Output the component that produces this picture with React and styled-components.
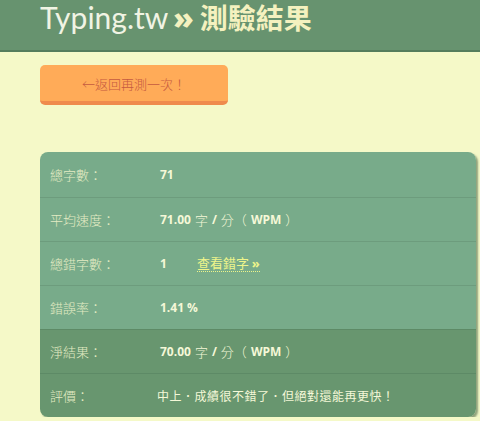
import styled, { createGlobalStyle } from 'styled-components';

const GlobalStyle = createGlobalStyle`
  html, body {
    margin: 0;
    padding: 0;
    background: #f5f9c8;
    font-family: "Open Sans", "Noto Sans CJK TC", sans-serif;
  }
`;

const Header = styled.header`
  background: #67936f;
  border-bottom: 2px solid #557d5c;
  height: 52px;
  padding: 0 40px;
  box-sizing: border-box;
  display: flex;
  align-items: flex-start;
  overflow: hidden;
`;

const Title = styled.h1`
  margin: 0;
  font-size: 30px;
  font-weight: 400;
  line-height: 34px;
  color: #f1f4e4;
  font-family: Lato, "Noto Sans CJK TC", sans-serif;
  white-space: nowrap;

  & .sep {
    font-family: "Open Sans", sans-serif;
    font-weight: 800;
    font-size: 30px;
    color: #f4f1bf;
    margin: 0 6px 0 5px;
  }

  & .page {
    font-weight: 700;
    font-size: 28px;
    color: #f4f1bf;
    font-family: "Noto Sans CJK TC", sans-serif;
  }
`;

const Main = styled.main`
  padding: 13px 4px 0 40px;
  display: flex;
  flex-direction: column;
  gap: 47px;
`;

const BackButton = styled.button`
  width: 188px;
  height: 40px;
  border: none;
  border-bottom: 4px solid #ef8b4d;
  border-radius: 5px;
  background: #ffab58;
  color: #c65a40;
  font-size: 13px;
  font-family: "Noto Sans CJK TC", sans-serif;
  font-weight: 300;
  padding: 0;
  cursor: pointer;
`;

const Table = styled.div`
  border-radius: 8px;
  overflow: hidden;
  box-shadow: 2px 2px 2px rgba(60, 90, 60, 0.55);
`;

const Row = styled.div`
  display: grid;
  grid-template-columns: 110px 1fr;
  align-items: center;
  height: 43px;
  padding: 0 10px;
  background: ${(p) => (p.$dark ? '#68966f' : '#78ab8a')};
  border-top: 1px solid ${(p) => (p.$dark ? '#5d8a66' : '#6d9c7d')};

  &:first-child {
    border-top: none;
    height: 45px;
  }
`;

const Label = styled.span`
  font-family: "Noto Sans CJK TC", sans-serif;
  font-weight: 300;
  font-size: 13px;
  color: #e4ecc4;
`;

const Value = styled.span`
  display: flex;
  align-items: center;
  gap: 4px;
  font-size: 12px;
  font-weight: 700;
  color: #f5f8d8;

  & .unit {
    font-family: "Noto Sans CJK TC", sans-serif;
    font-weight: 300;
    font-size: 13px;
  }
`;

const Comment = styled.span`
  margin-left: -3px;
  font-family: "Noto Sans CJK TC", sans-serif;
  font-size: 12px;
  font-weight: 400;
  letter-spacing: 0.5px;
  color: #f5f8d8;
`;

const Link = styled.a`
  margin-left: 26px;
  font-family: "Noto Sans CJK TC", sans-serif;
  font-weight: 400;
  font-size: 13px;
  color: #eef58a;
  text-decoration: none;
  border-bottom: 1px dotted #eef58a;
  line-height: 16px;

  & b {
    font-family: "Open Sans", sans-serif;
    font-weight: 700;
  }
`;

function Wpm({ n }) {
  return (
    <Value>
      {n} <span className="unit">字</span> / <span className="unit">分（</span>WPM
      <span className="unit">）</span>
    </Value>
  );
}

export default function App() {
  return (
    <>
      <GlobalStyle />
      <Header>
        <Title>
          Typing.tw<span className="sep">»</span>
          <span className="page">測驗結果</span>
        </Title>
      </Header>
      <Main>
        <BackButton>←返回再測一次！</BackButton>
        <Table>
          <Row>
            <Label>總字數：</Label>
            <Value>71</Value>
          </Row>
          <Row>
            <Label>平均速度：</Label>
            <Wpm n="71.00" />
          </Row>
          <Row>
            <Label>總錯字數：</Label>
            <Value>
              1
              <Link href="#">
                查看錯字 <b>»</b>
              </Link>
            </Value>
          </Row>
          <Row>
            <Label>錯誤率：</Label>
            <Value>1.41 %</Value>
          </Row>
          <Row $dark>
            <Label>淨結果：</Label>
            <Wpm n="70.00" />
          </Row>
          <Row $dark>
            <Label>評價：</Label>
            <Comment>中上．成績很不錯了．但絕對還能再更快！</Comment>
          </Row>
        </Table>
      </Main>
    </>
  );
}
